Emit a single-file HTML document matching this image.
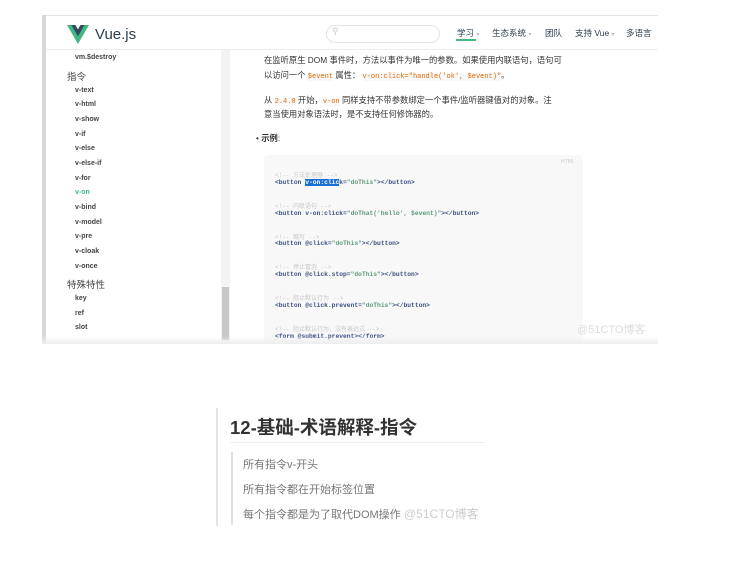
<!DOCTYPE html><html><head><meta charset="utf-8"><style>
body{margin:0;width:736px;height:562px;background:#fff;position:relative;overflow:hidden;font-family:"Liberation Sans","Noto Sans CJK SC",sans-serif}
.a{position:absolute;white-space:nowrap}
.sb{font-size:7px;color:#444;left:75px;font-weight:bold}
.h{font-size:9.5px;color:#444;left:67px}
.code{font-family:"Liberation Mono",monospace;font-size:6.3px;left:275px;color:#3d4f82;font-weight:bold}
.cm{font-family:"Liberation Mono","Noto Sans CJK SC",monospace;font-size:6px;left:275px;color:#c8c8c8}
.s{color:#5a9a7a}
.t{font-size:8.3px;color:#333;left:264px}
.o{font-family:"Liberation Mono",monospace;color:#e96900;background:#f8f8f8;font-size:7px}
</style></head><body>
<div class="a" style="left:42px;top:15px;width:616px;height:329px;background:#fff;border-top:1px solid #e6e6e6"></div>
<div class="a" style="left:42px;top:15px;width:4px;height:329px;background:#d8d8d8"></div>
<div class="a" style="left:46px;top:49px;width:612px;height:1px;background:#eee"></div>
<svg class="a" style="left:67px;top:25px" width="22" height="19" viewBox="0 0 261 226"><path d="M161 0 130 54 99 0H0l130 226L261 0z" fill="#41b883"/><path d="M161 0 130 54 99 0H52l78 135L208 0z" fill="#34495e"/></svg>
<div class="a" style="left:95px;top:26px;font-size:15px;color:#2c3e50">Vue.js</div>
<div class="a" style="left:326px;top:25px;width:112px;height:16px;border:1px solid #e3e3e3;border-radius:9px"></div>
<div class="a" style="left:332px;top:26px;font-size:9px;color:#ccc">⚲</div>
<div class="a" style="left:457px;top:27px;font-size:8.5px;color:#2c3e50">学习 <span style="color:#bbb;font-size:6px">▾</span></div>
<div class="a" style="left:456px;top:39px;width:20px;height:2px;background:#42b983"></div>
<div class="a" style="left:492px;top:27px;font-size:8.5px;color:#2c3e50">生态系统 <span style="color:#bbb;font-size:6px">▾</span></div>
<div class="a" style="left:545px;top:27px;font-size:8.5px;color:#2c3e50">团队</div>
<div class="a" style="left:575px;top:27px;font-size:8.5px;color:#2c3e50">支持 Vue <span style="color:#bbb;font-size:6px">▾</span></div>
<div class="a" style="left:626px;top:27px;font-size:8.5px;color:#2c3e50">多语言</div>
<div class="a sb" style="top:54px">vm.$destroy</div>
<div class="a h" style="top:69px">指令</div>
<div class="a sb" style="top:87px">v-text</div>
<div class="a sb" style="top:101px">v-html</div>
<div class="a sb" style="top:116px">v-show</div>
<div class="a sb" style="top:131px">v-if</div>
<div class="a sb" style="top:145px">v-else</div>
<div class="a sb" style="top:160px">v-else-if</div>
<div class="a sb" style="top:175px">v-for</div>
<div class="a sb" style="top:189px;color:#42b983">v-on</div>
<div class="a sb" style="top:204px">v-bind</div>
<div class="a sb" style="top:219px">v-model</div>
<div class="a sb" style="top:233px">v-pre</div>
<div class="a sb" style="top:248px">v-cloak</div>
<div class="a sb" style="top:263px">v-once</div>
<div class="a h" style="top:277px">特殊特性</div>
<div class="a sb" style="top:295px">key</div>
<div class="a sb" style="top:310px">ref</div>
<div class="a sb" style="top:324px">slot</div>
<div class="a" style="left:221px;top:50px;width:9px;height:294px;background:#f3f3f3"></div>
<div class="a" style="left:222px;top:287px;width:7px;height:53px;background:#c8c8c8"></div>
<div class="a t" style="top:54px">在监听原生 DOM 事件时，方法以事件为唯一的参数。如果使用内联语句，语句可</div>
<div class="a t" style="top:69px">以访问一个 <span class="o">$event</span> 属性： <span class="o">v-on:click="handle('ok', $event)"</span>。</div>
<div class="a t" style="top:94px">从 <span class="o">2.4.0</span> 开始，<span class="o">v-on</span> 同样支持不带参数绑定一个事件/监听器键值对的对象。注</div>
<div class="a t" style="top:108px">意当使用对象语法时，是不支持任何修饰器的。</div>
<div class="a t" style="top:132px;left:256px">• <b>示例</b>:</div>
<div class="a" style="left:264px;top:155px;width:319px;height:189px;background:#f8f8f8;border-radius:4px"></div>
<div class="a" style="left:561px;top:159px;font-size:5px;color:#ccc">HTML</div>
<div class="a cm" style="top:170px">&lt;!-- 方法处理器 --&gt;</div>
<div class="a code" style="top:179px">&lt;button <span style="background:#1a6fd6;color:#fff">v-on:clic</span>k=<span class="s">"doThis"</span>&gt;&lt;/button&gt;</div>
<div class="a cm" style="top:201px">&lt;!-- 内联语句 --&gt;</div>
<div class="a code" style="top:210px">&lt;button v-on:click=<span class="s">"doThat('hello', $event)"</span>&gt;&lt;/button&gt;</div>
<div class="a cm" style="top:232px">&lt;!-- 缩写 --&gt;</div>
<div class="a code" style="top:240px">&lt;button @click=<span class="s">"doThis"</span>&gt;&lt;/button&gt;</div>
<div class="a cm" style="top:262px">&lt;!-- 停止冒泡 --&gt;</div>
<div class="a code" style="top:271px">&lt;button @click.stop=<span class="s">"doThis"</span>&gt;&lt;/button&gt;</div>
<div class="a cm" style="top:293px">&lt;!-- 阻止默认行为 --&gt;</div>
<div class="a code" style="top:302px">&lt;button @click.prevent=<span class="s">"doThis"</span>&gt;&lt;/button&gt;</div>
<div class="a cm" style="top:324px">&lt;!-- 阻止默认行为，没有表达式 --&gt;</div>
<div class="a code" style="top:333px">&lt;form @submit.prevent&gt;&lt;/form&gt;</div>
<div class="a" style="left:42px;top:336px;width:616px;height:8px;background:linear-gradient(#fff0,#eee)"></div>
<div class="a" style="left:577px;top:321px;font-size:11px;color:#ddd">@51CTO博客</div>
<div class="a" style="left:216px;top:408px;width:2px;height:118px;background:#e4e4e4"></div>
<div class="a" style="left:230px;top:414px;font-size:18.5px;font-weight:bold;color:#333">12-基础-术语解释-指令</div>
<div class="a" style="left:230px;top:442px;width:255px;height:1px;background:#eee"></div>
<div class="a" style="left:231px;top:452px;width:2px;height:73px;background:#e0e0e0"></div>
<div class="a" style="left:243px;top:456px;font-size:11px;color:#777">所有指令v-开头</div>
<div class="a" style="left:243px;top:481px;font-size:11px;color:#777">所有指令都在开始标签位置</div>
<div class="a" style="left:243px;top:506px;font-size:11px;color:#777">每个指令都是为了取代DOM操作</div>
<div class="a" style="left:404px;top:505px;font-size:12px;color:#ccc">@51CTO博客</div>
</body></html>
